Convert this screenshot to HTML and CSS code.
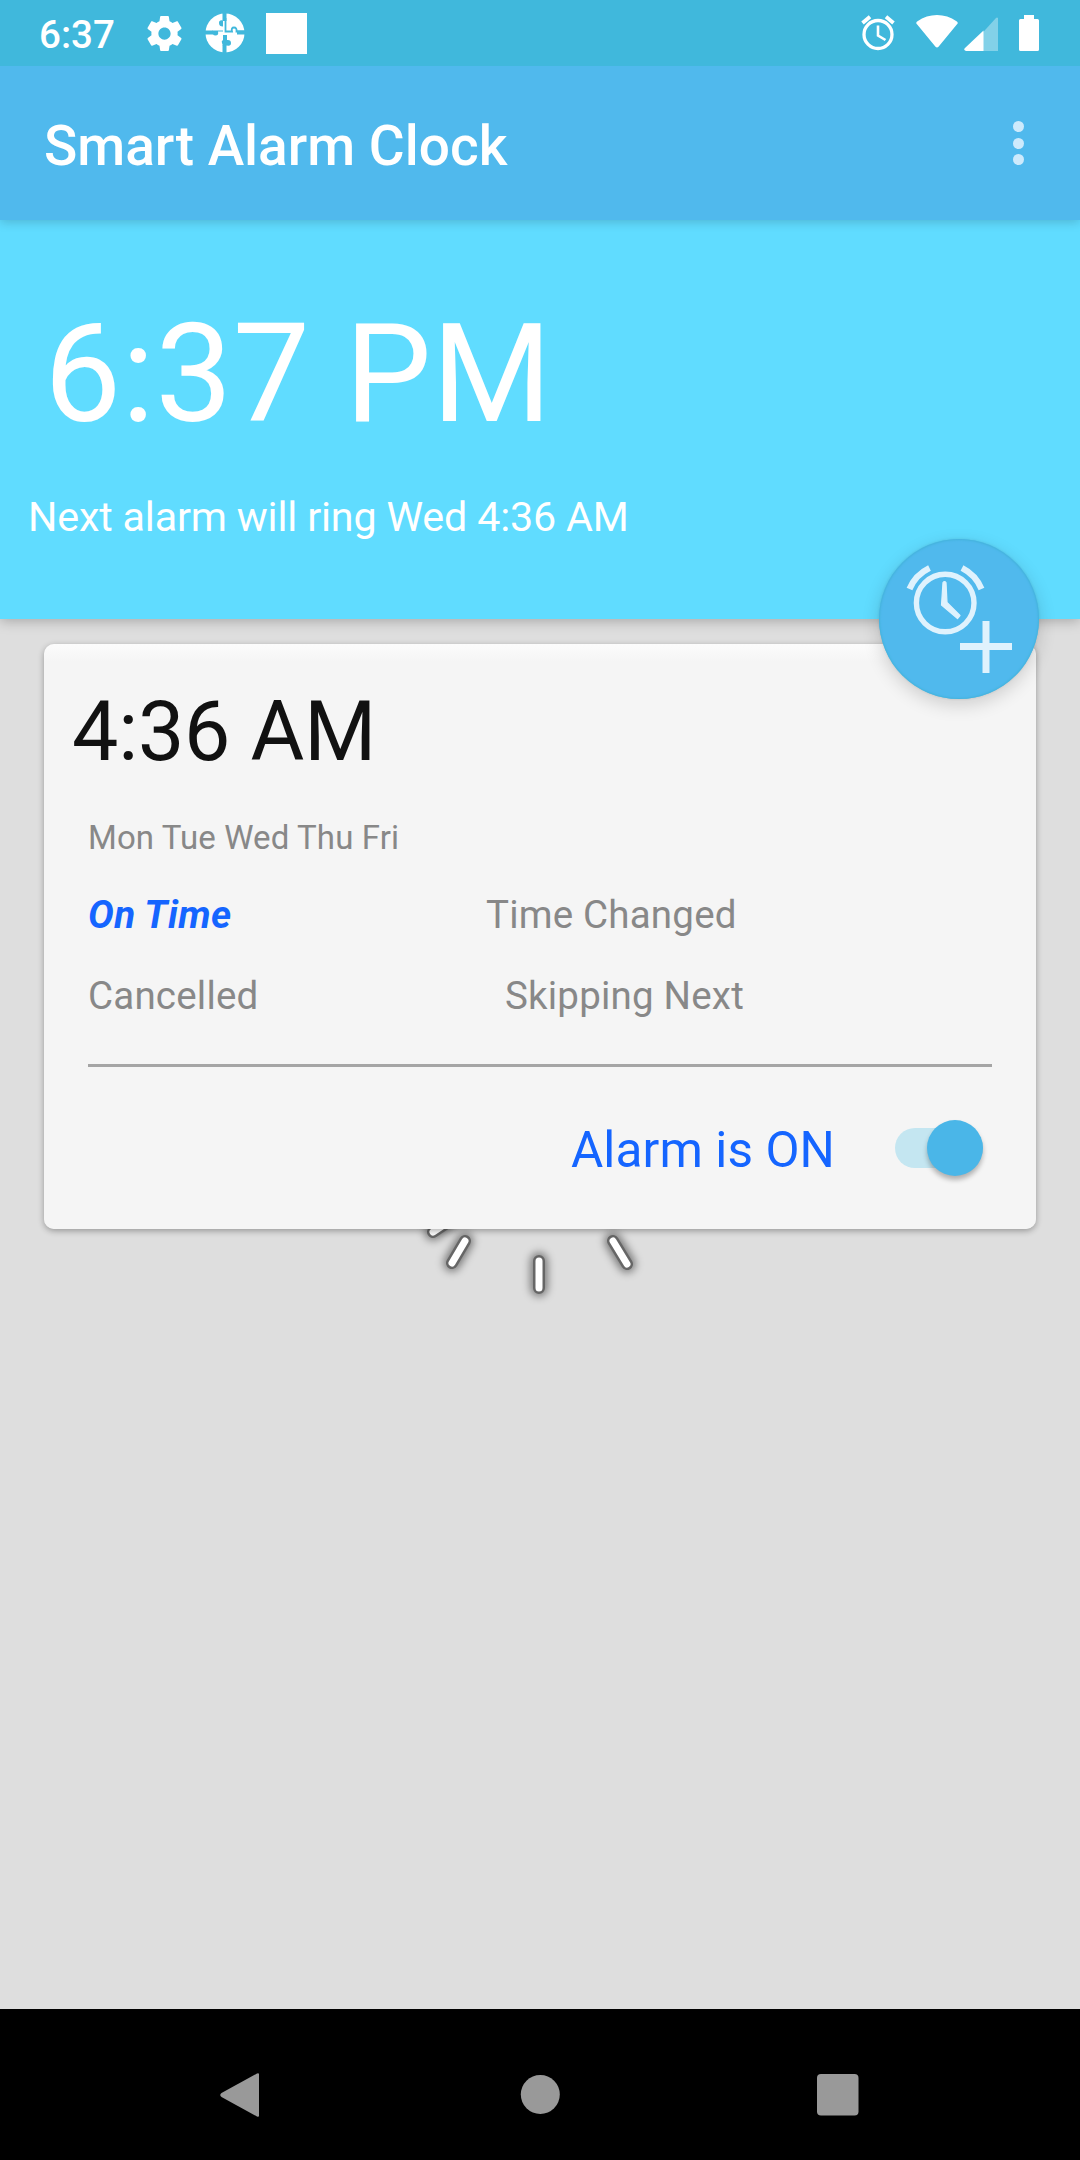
FILE: index.html
```html
<!DOCTYPE html>
<html lang="en">
<head>
<meta charset="utf-8">
<title>Smart Alarm Clock</title>
<link rel="stylesheet" href="styles.css">
</head>
<body>
<div class="screen">
  <header class="status-bar">
    <span class="status-time">6:37</span>
    <svg class="status-gear" viewBox="2 2 20 20"><path fill="#fff" d="M19.43 12.98c.04-.32.07-.64.07-.98s-.03-.66-.07-.98l2.11-1.65c.19-.15.24-.42.12-.64l-2-3.46c-.12-.22-.39-.3-.61-.22l-2.49 1c-.52-.4-1.08-.73-1.69-.98l-.38-2.65C14.46 2.18 14.25 2 14 2h-4c-.25 0-.46.18-.49.42l-.38 2.65c-.61.25-1.17.59-1.69.98l-2.49-1c-.23-.09-.49 0-.61.22l-2 3.46c-.13.22-.07.49.12.64l2.11 1.65c-.04.32-.07.65-.07.98s.03.66.07.98l-2.11 1.65c-.19.15-.24.42-.12.64l2 3.46c.12.22.39.3.61.22l2.49-1c.52.4 1.08.73 1.69.98l.38 2.65c.03.24.24.42.49.42h4c.25 0 .46-.18.49-.42l.38-2.65c.61-.25 1.17-.59 1.69-.98l2.49 1c.23.09.49 0 .61-.22l2-3.46c.12-.22.07-.49-.12-.64l-2.11-1.65zM12 15.500c-1.930 0-3.500-1.570-3.500-3.500s1.570-3.500 3.500-3.500 3.500 1.570 3.500 3.500-1.570 3.500-3.500 3.500z"/></svg>
    <svg class="status-puzzle" viewBox="0 0 40 40">
      <circle cx="20" cy="20" r="19.500" fill="#fff"/>
      <path fill="none" stroke="#40b8dc" stroke-width="4" d="M19.500 0v8M0 19.500h8M40 19.500h-8M19.500 40v-8"/>
      <path fill="#40b8dc" d="M18 7.500q-4-1-4 2.500t4 3.500v5h-5q1 4-2.500 4T7.500 18v-.5H18zM22 32.500q4 1 4-2.500t-4-3v-5h-4v5q-2 1-1 3l1 3z"/>
      <path fill="none" stroke="#40b8dc" stroke-width="1.800" d="M20.500 5v13.500H27q-1-4 2-4t2.500 4H40"/>
    </svg>
    <span class="status-square"></span>
    <span class="grow"></span>
    <svg class="status-alarm" viewBox="0 0 34 36" fill="none" stroke="#fff"><circle cx="17" cy="19.500" r="14" stroke-width="3.300"/><path stroke-width="2.600" d="M17 10.500v10l7.500 4.500"/><path stroke-width="3.800" d="M1.500 8l7.500-6.300M32.500 8L25 1.700"/></svg>
    <svg class="status-wifi" viewBox="0 0 42 34"><path fill="#fff" d="M1.200 9.500C-.2 8.300 0 7.200 1.500 6.200 13-2 29-2 40.500 6.200c1.500 1 1.700 2.100.3 3.400L22.500 31.800q-1.500 1.500-3 0z"/></svg>
    <svg class="status-signal" viewBox="0 0 34 34"><path fill="#fff" opacity=".35" d="M34 1v33H2L32 1q1-1 2 0z"/><path fill="#fff" d="M19.500 13.500V34H2q-3-1-1-3z"/></svg>
    <svg class="status-battery" viewBox="0 0 20 36"><path fill="#fff" d="M5 0h10v4h3.500Q20 4 20 5.500v29q0 1.500-1.500 1.500h-17Q0 36 0 34.500v-29Q0 4 1.500 4H5z"/></svg>
  </header>

  <div class="app-bar">
    <h1 class="app-title">Smart Alarm Clock</h1>
    <div class="overflow"><i></i><i></i><i></i></div>
  </div>

  <section class="hero">
    <div class="hero-clock">6:37 PM</div>
    <div class="hero-next">Next alarm will ring Wed 4:36 AM</div>
    <button class="fab" aria-label="Add alarm">
      <svg viewBox="0 0 160 160" fill="none" stroke="#dff2fd">
        <circle cx="66.200" cy="64" r="28.800" stroke-width="5.400"/>
        <path fill="#dff2fd" stroke="#dff2fd" stroke-width="1.200" stroke-linejoin="round" d="M64 43.500q1.500-2 3 0l1 20 13 13-2.500 3L62.500 66z"/>
        <path stroke-width="6.200" d="M30.500 50A41 41 0 0 1 50.500 29M83 29A41 41 0 0 1 102.500 50"/>
        <path stroke-width="7" d="M81 107.500h52M107 82v52"/>
      </svg>
    </button>
  </section>

  <main class="content">
    <svg class="spinner" viewBox="0 0 280 110">
      <g class="spinner-halo"><path d="M39 31l-13 22M187 31l14 23M113 51v27M22 12L7 22"/></g>
      <g class="spinner-edge"><path d="M39 31l-13 22M187 31l14 23M113 51v27M22 12L7 22"/></g>
      <g class="spinner-core"><path d="M39 31l-13 22M187 31l14 23M113 51v27M22 12L7 22"/></g>
    </svg>
    <article class="card">
      <div class="card-time">4:36 AM</div>
      <div class="card-days">Mon Tue Wed Thu Fri</div>
      <div class="states">
        <span class="state state-active">On Time</span>
        <span class="state">Time Changed</span>
      </div>
      <div class="states states-second">
        <span class="state">Cancelled</span>
        <span class="state">Skipping Next</span>
      </div>
      <div class="divider"></div>
      <div class="toggle-row">
        <span class="toggle-label">Alarm is ON</span>
        <span class="switch"><span class="thumb"></span></span>
      </div>
    </article>
  </main>

  <nav class="nav-bar">
    <svg class="nav-icon" viewBox="0 0 50 50"><path fill="#999" d="M42 4.500v41q0 2-2 1L4.500 27q-2.500-2 0-4L40 3.500q2-1 2 1z"/></svg>
    <svg class="nav-icon" viewBox="0 0 50 50"><circle cx="25.300" cy="24.500" r="19.500" fill="#999"/></svg>
    <svg class="nav-icon" viewBox="0 0 50 50"><rect x="4" y="4" width="41.500" height="41.500" rx="4" fill="#999"/></svg>
  </nav>
</div>
</body>
</html>
```
FILE: styles.css
```css
* { box-sizing: border-box; }
body { margin: 0; font-family: Roboto, "Liberation Sans", sans-serif; }
.screen { width: 1080px; height: 2160px; display: flex; flex-direction: column; background: #dedede; overflow: hidden; }
.grow { flex: 1; }

.status-bar { position: relative; z-index: 3; height: 66px; flex: none; display: flex; align-items: center; padding: 0 41px 0 39px; background: #40b8dc; color: #fff; }
.status-bar svg { display: block; flex: none; }
.status-time { width: 108px; font-size: 38.5px; font-weight: 500; line-height: 66px; padding-top: 3px; }
.status-gear { width: 35px; height: 35px; }
.status-puzzle { width: 40px; height: 40px; margin-left: 23px; }
.status-square { width: 41px; height: 41px; margin: 1px 0 0 21px; background: #fff; }
.status-alarm { width: 34px; height: 36px; margin-right: 21px; }
.status-wifi { width: 42px; height: 34px; margin: 0 6px 2px 0; }
.status-signal { width: 34px; height: 34px; margin: 1px 21px 0 0; }
.status-battery { width: 20px; height: 36px; }

.app-bar { height: 154px; flex: none; display: flex; justify-content: space-between; align-items: center; padding: 0 56px 0 44px; background: #50b9ed; position: relative; z-index: 2; box-shadow: 0 2px 10px rgba(0,0,0,.18); }
.app-title { margin: 6px 0 0; font-size: 55px; font-weight: 500; line-height: 64px; color: #fff; white-space: nowrap; }
.overflow { display: flex; flex-direction: column; gap: 5.5px; }
.overflow i { width: 11px; height: 11px; border-radius: 50%; background: #cdeafc; }

.hero { height: 399px; flex: none; padding-top: 74px; background: #60dcff; color: #fff; position: relative; z-index: 1; box-shadow: 0 2px 12px rgba(0,0,0,.25); }
.hero-clock { padding-left: 44px; font-size: 137.5px; line-height: 160px; letter-spacing: .3px; white-space: nowrap; }
.hero-next { margin-top: 39px; padding-left: 28px; font-size: 41.25px; line-height: 48px; letter-spacing: -.18px; white-space: nowrap; }
.fab { position: absolute; right: 41px; bottom: -80px; width: 160px; height: 160px; padding: 0; border: 0; border-radius: 50%; background: #50b9ed; box-shadow: 0 6px 18px rgba(0,0,0,.16), 0 0 3px rgba(0,0,0,.1), inset 0 0 2px 1px #43b3dc; }
.fab svg { display: block; width: 160px; height: 160px; }

.content { flex: 1; padding: 25px 44px 0; position: relative; }
.card { position: relative; height: 585px; padding: 40px 44px 0; border-radius: 10px; background: linear-gradient(#fcfcfc, #f5f5f5 18px); box-shadow: 0 2px 6px rgba(0,0,0,.32); }
.card-time { margin-left: -16px; font-size: 82.5px; line-height: 96px; letter-spacing: -.2px; color: #111; white-space: nowrap; }
.card-days { margin-top: 38px; font-size: 33px; line-height: 39px; letter-spacing: .1px; color: #888; }
.states { display: grid; grid-template-columns: 398px 1fr; margin-top: 35px; font-size: 38.5px; line-height: 45px; letter-spacing: .2px; color: #888; }
.states-second { grid-template-columns: 417px 1fr; margin-top: 36px; }
.state-active { color: #1565ff; font-weight: 700; font-style: italic; letter-spacing: .4px; }
.divider { height: 3px; margin-top: 46px; background: #a5a5a5; }
.toggle-row { display: flex; justify-content: flex-end; align-items: center; padding-right: 9px; margin-top: 53px; }
.toggle-label { margin: 1px 60px 0 0; font-size: 49.5px; line-height: 58px; letter-spacing: .1px; color: #1565ff; }
.switch { display: flex; justify-content: flex-end; align-items: center; width: 88px; height: 40px; margin-bottom: 3px; border-radius: 20px; background: #c4e6f1; }
.thumb { width: 56px; height: 56px; flex: none; border-radius: 50%; background: #4ab6e8; box-shadow: 0 4px 5px rgba(0,0,0,.28); }

.spinner { position: absolute; left: 426px; top: 591px; width: 280px; height: 110px; fill: none; stroke-linecap: round; overflow: visible; }
.spinner-halo { stroke: #333; stroke-width: 17px; opacity: .6; filter: blur(4px); }
.spinner-edge { stroke: #666; stroke-width: 12px; filter: blur(.6px); }
.spinner-core { stroke: #fff; stroke-width: 7px; }

.nav-bar { height: 151px; flex: none; display: flex; align-items: center; justify-content: space-between; padding: 20px 217px 0; background: #000; }
.nav-icon { display: block; width: 50px; height: 50px; }
```
